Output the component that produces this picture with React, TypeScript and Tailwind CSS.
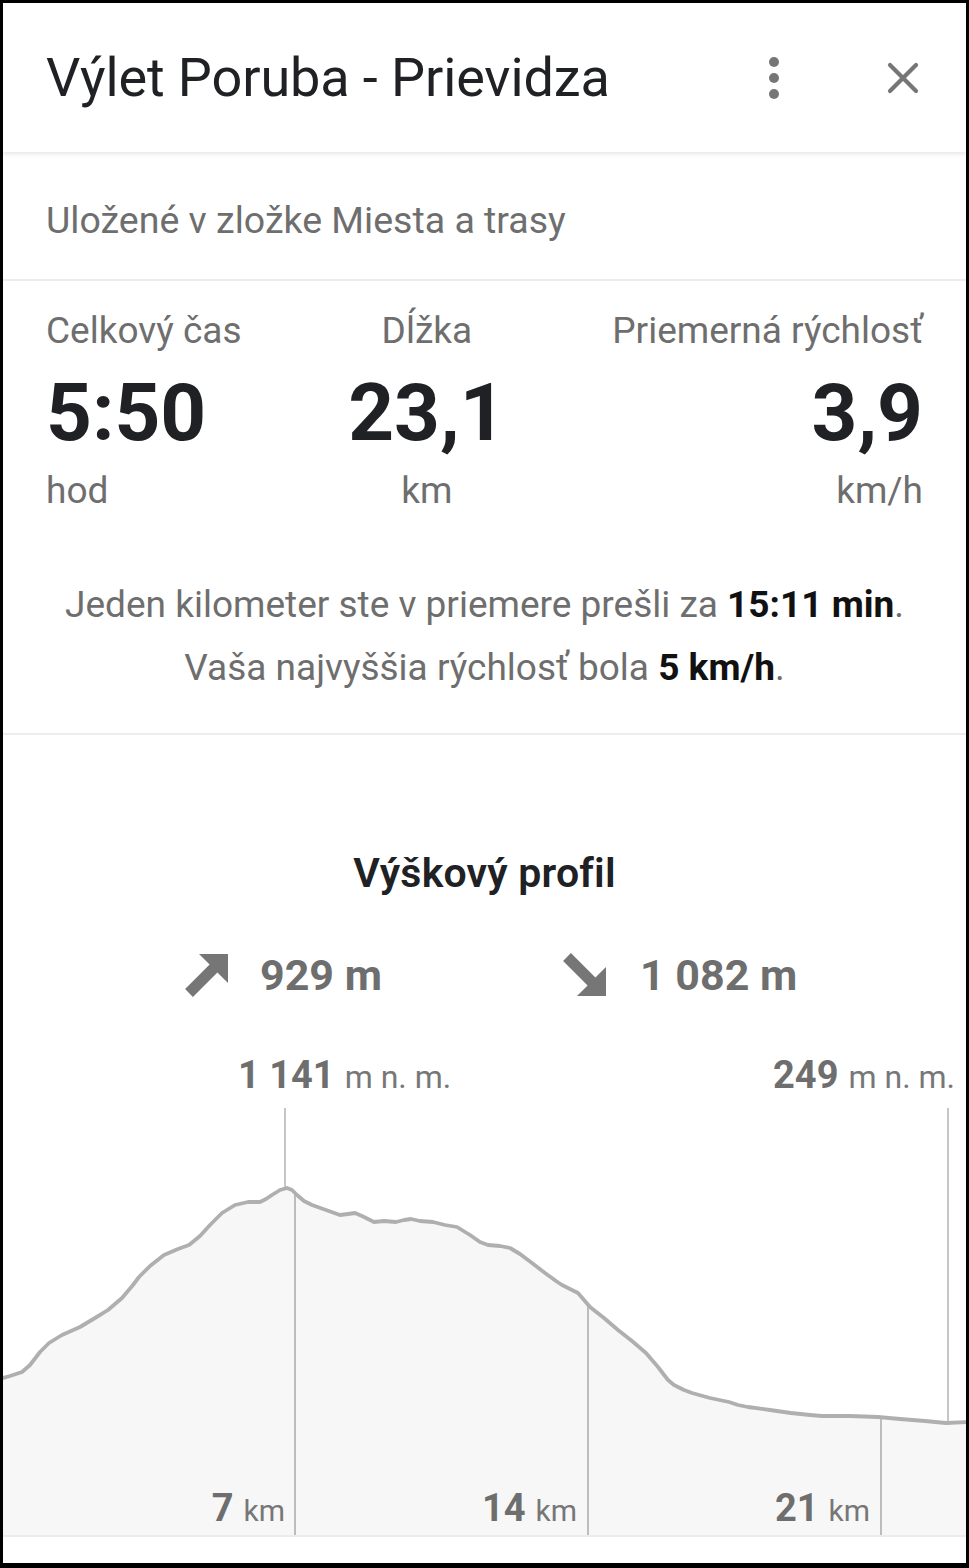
import React from "react";

const pts: [number, number][] = [
  [0, 1379], [10, 1376], [22, 1372], [30, 1365], [40, 1352], [49, 1343], [62, 1335], [80, 1327],
  [95, 1318], [108, 1310], [122, 1298], [133, 1285], [139, 1277], [150, 1266], [164, 1255],
  [178, 1249], [189, 1245], [200, 1236], [210, 1225], [222, 1213], [235, 1205], [248, 1202],
  [260, 1202], [266, 1199], [272, 1195], [280, 1190], [287, 1188], [292, 1190], [297, 1195],
  [304, 1201], [312, 1205], [326, 1210], [340, 1215], [348, 1214], [355, 1213], [362, 1216],
  [368, 1219], [374, 1222], [384, 1221], [396, 1222], [404, 1220], [411, 1219], [420, 1221],
  [433, 1222], [445, 1225], [457, 1227], [470, 1235], [480, 1242], [488, 1245], [500, 1246],
  [510, 1248], [520, 1254], [532, 1263], [545, 1273], [556, 1281], [562, 1285], [570, 1289],
  [578, 1293], [584, 1300], [590, 1307], [604, 1318], [618, 1330], [632, 1341], [646, 1353],
  [658, 1367], [668, 1380], [674, 1385], [684, 1390], [692, 1393], [710, 1398], [729, 1402],
  [738, 1405], [748, 1407], [770, 1410], [791, 1413], [810, 1415], [822, 1416], [850, 1416],
  [878, 1417], [900, 1419], [925, 1421], [946, 1423], [969, 1422],
];

const linePath = pts.map((p, i) => `${i === 0 ? "M" : "L"}${p[0]} ${p[1]}`).join(" ");
const fillPath = `${linePath} L969 1535 L0 1535 Z`;

function ArrowIcon({ down = false }: { down?: boolean }) {
  return (
    <svg width="44" height="44" viewBox="0 0 44 44" className="shrink-0">
      <g transform={down ? "translate(0 44) scale(1 -1)" : undefined}>
        <path
          d="M14 1 H43 V30 L32.4 19.4 L7.9 43.9 L0.1 36.1 L24.6 11.6 Z"
          fill="#767676"
        />
      </g>
    </svg>
  );
}

export default function App() {
  return (
    <div
      className="w-[969px] h-[1568px] border-black border-t-[3px] border-x-[3px] border-b-[5px] bg-white flex flex-col overflow-hidden"
      style={{ fontFamily: "Roboto, 'Noto Sans', sans-serif" }}
    >
      {/* Header */}
      <div className="h-[149px] shrink-0 flex items-center pl-[43px] relative z-10 bg-white shadow-[0_2px_4px_rgba(0,0,0,0.10)]">
        <div className="text-[54px] leading-[60px] text-[#202124] tracking-[-0.1px]">
          Výlet Poruba - Prievidza
        </div>
        <div className="ml-auto flex items-center">
          <div className="flex flex-col items-center gap-[6px] w-[10px]">
            <div className="w-[10px] h-[10px] rounded-full bg-[#767676]" />
            <div className="w-[10px] h-[10px] rounded-full bg-[#767676]" />
            <div className="w-[10px] h-[10px] rounded-full bg-[#767676]" />
          </div>
          <svg width="32" height="32" viewBox="0 0 32 32" className="ml-[108px] mr-[47px]">
            <path d="M3 3 L29 29 M29 3 L3 29" stroke="#767676" strokeWidth="4.2" strokeLinecap="round" />
          </svg>
        </div>
      </div>

      {/* Saved in */}
      <div className="pt-[48px] pb-[39px] px-[43px] text-[37.5px] leading-[40px] text-[#6e6e6e]">
        Uložené v zložke Miesta a trasy
      </div>
      <div className="h-[2px] bg-[#ececec]" />

      {/* Stats */}
      <div className="pt-[30px] pb-[34px] px-[43px]">
        <div className="flex justify-between">
          <div className="flex flex-col items-start">
            <div className="text-[37px] leading-[40px] text-[#6e6e6e]">Celkový čas</div>
            <div className="mt-[22px] text-[80px] leading-[80px] font-bold text-[#202124]">5:50</div>
            <div className="mt-[18px] text-[37px] leading-[40px] text-[#6e6e6e]">hod</div>
          </div>
          <div className="flex flex-col items-center">
            <div className="text-[37px] leading-[40px] text-[#6e6e6e]">Dĺžka</div>
            <div className="mt-[22px] text-[80px] leading-[80px] font-bold text-[#202124]">23,1</div>
            <div className="mt-[18px] text-[37px] leading-[40px] text-[#6e6e6e]">km</div>
          </div>
          <div className="flex flex-col items-end">
            <div className="text-[37px] leading-[40px] text-[#6e6e6e]">Priemerná rýchlosť</div>
            <div className="mt-[22px] text-[80px] leading-[80px] font-bold text-[#202124]">3,9</div>
            <div className="mt-[18px] text-[37px] leading-[40px] text-[#6e6e6e]">km/h</div>
          </div>
        </div>
        <div className="mt-[62px] text-center text-[37px] leading-[63px] text-[#6e6e6e]">
          <div>
            Jeden kilometer ste v priemere prešli za{" "}
            <span className="font-bold text-[#111]">15:11 min</span>.
          </div>
          <div>
            Vaša najvyššia rýchlosť bola <span className="font-bold text-[#111]">5 km/h</span>.
          </div>
        </div>
      </div>
      <div className="h-[2px] bg-[#ececec]" />

      {/* Elevation profile */}
      <div className="pt-[114px] flex flex-col">
        <div className="text-center text-[41px] leading-[48px] font-semibold text-[#202124] tracking-[0.2px]">
          Výškový profil
        </div>
        <div className="mt-[52px] h-[52px] flex items-center pl-[182px]">
          <div className="w-[378px] flex items-center">
            <ArrowIcon />
            <span className="ml-[31px] text-[43px] leading-[52px] font-bold text-[#6e6e6e]">929 m</span>
          </div>
          <div className="flex items-center">
            <ArrowIcon down />
            <span className="ml-[33px] text-[43px] leading-[52px] font-bold text-[#6e6e6e]">1 082 m</span>
          </div>
        </div>

        {/* Chart */}
        <div className="relative h-[534px] w-[963px]">
          <svg
            className="absolute inset-0"
            width="963"
            height="534"
            viewBox="3 1001 963 534"
          >
            <path d={fillPath} fill="#f7f7f7" />
            <line x1="285" y1="1108" x2="285" y2="1188" stroke="#c6c6c6" strokeWidth="2" />
            <line x1="948" y1="1108" x2="948" y2="1422" stroke="#c6c6c6" strokeWidth="2" />
            <line x1="295" y1="1193" x2="295" y2="1535" stroke="#bdbdbd" strokeWidth="2" />
            <line x1="588" y1="1305" x2="588" y2="1535" stroke="#bdbdbd" strokeWidth="2" />
            <line x1="881" y1="1417" x2="881" y2="1535" stroke="#bdbdbd" strokeWidth="2" />
            <path d={linePath} fill="none" stroke="#afafaf" strokeWidth="3.8" strokeLinejoin="round" />
          </svg>

          <div className="absolute left-[235px] top-[52px] leading-[44px] whitespace-nowrap text-[#6e6e6e]">
            <span className="text-[38px] font-bold">1 141</span>
            <span className="text-[32px] ml-[10px] text-[#777]">m n. m.</span>
          </div>
          <div className="absolute right-[11px] top-[52px] leading-[44px] whitespace-nowrap text-[#6e6e6e]">
            <span className="text-[38px] font-bold">249</span>
            <span className="text-[32px] ml-[10px] text-[#777]">m n. m.</span>
          </div>

          <div className="absolute right-[681px] top-[485px] leading-[44px] whitespace-nowrap text-[#6e6e6e]">
            <span className="text-[38px] font-bold">7</span>
            <span className="text-[30px] ml-[10px] text-[#777]">km</span>
          </div>
          <div className="absolute right-[389px] top-[485px] leading-[44px] whitespace-nowrap text-[#6e6e6e]">
            <span className="text-[38px] font-bold">14</span>
            <span className="text-[30px] ml-[10px] text-[#777]">km</span>
          </div>
          <div className="absolute right-[96px] top-[485px] leading-[44px] whitespace-nowrap text-[#6e6e6e]">
            <span className="text-[38px] font-bold">21</span>
            <span className="text-[30px] ml-[10px] text-[#777]">km</span>
          </div>
        </div>
        <div className="h-[2px] bg-[#ececec]" />
      </div>
      <div className="flex-1 bg-white" />
    </div>
  );
}
